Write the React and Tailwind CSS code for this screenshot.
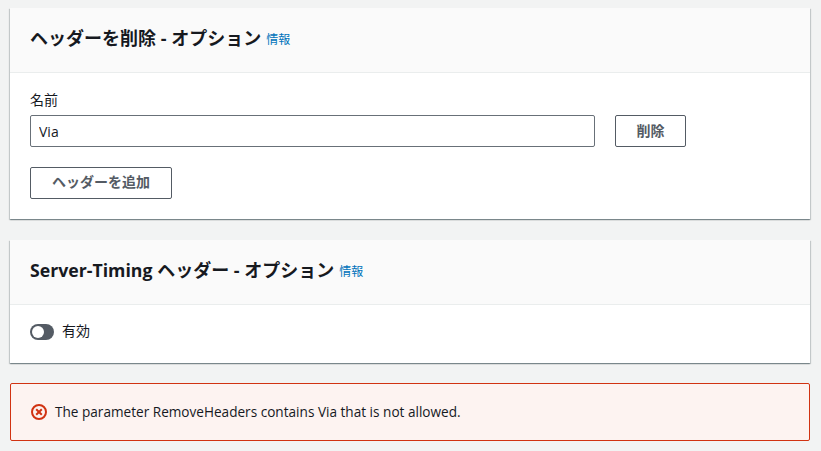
import React from 'react';

const cardShadow = 'bg-white shadow-[0_1px_1px_0_rgba(0,28,36,0.3),1px_1px_1px_0_rgba(0,28,36,0.15),-1px_1px_1px_0_rgba(0,28,36,0.15)]';

function CardHeader({ children }) {
  return (
    <div className="h-[65px] flex items-center px-5 pb-[5px] bg-[#fafafa] border-b border-[#eaeded]">
      <h2 className="text-[18px] leading-[22px] font-bold text-[#16191f]">{children}</h2>
      <a className="ml-[5px] mt-[5px] text-[12px] leading-[16px] text-[#0073bb]">情報</a>
    </div>
  );
}

export default function App() {
  return (
    <div className="w-[821px] h-[451px] overflow-hidden bg-[#f2f3f3] pl-[10px] pr-[11px] pt-2 text-[14px] text-[#16191f] font-['Open_Sans','Noto_Sans_CJK_JP',sans-serif]">
      <section className={`h-[211px] ${cardShadow}`}>
        <CardHeader>ヘッダーを削除 - オプション</CardHeader>
        <div className="px-5 pt-[17px]">
          <label className="block text-[14px] leading-[20px] mb-[5px]">名前</label>
          <div className="flex items-center gap-5">
            <input readOnly value="Via" className="w-[565px] h-8 px-2 border border-[#687078] rounded-[2px] bg-white text-[14px] text-[#16191f] outline-none" />
            <button className="w-[71px] h-8 pb-[1px] border border-[#545b64] rounded-[2px] bg-white text-[14px] font-semibold text-[#545b64]">削除</button>
          </div>
          <button className="mt-5 w-[142px] h-8 pb-[3px] border border-[#545b64] rounded-[2px] bg-white text-[14px] font-semibold text-[#545b64]">ヘッダーを追加</button>
        </div>
      </section>

      <section className={`mt-[21px] h-[123px] ${cardShadow}`}>
        <CardHeader><span className="text-[17.7px]">Server-Timing</span> ヘッダー - オプション</CardHeader>
        <div className="px-5 pt-[17px] flex items-center gap-2">
          <span className="w-6 h-4 rounded-full bg-[#545b64] flex items-center pl-[2px]">
            <span className="w-3 h-3 rounded-full bg-white" />
          </span>
          <span className="leading-[20px] -mt-[1px]">有効</span>
        </div>
      </section>

      <div className="mt-5 h-[58px] flex items-center gap-2 px-5 bg-[#fdf3f1] border border-[#d13212] rounded-[2px]">
        <svg width="16" height="16" viewBox="0 0 16 16" fill="none" stroke="#d13212" strokeWidth="2">
          <circle cx="8" cy="8" r="7" />
          <path d="M5.2 5.2l5.6 5.6M10.8 5.2l-5.6 5.6" />
        </svg>
        <span className="text-[13.6px] leading-[20px]">The parameter RemoveHeaders contains Via that is not allowed.</span>
      </div>
    </div>
  );
}
